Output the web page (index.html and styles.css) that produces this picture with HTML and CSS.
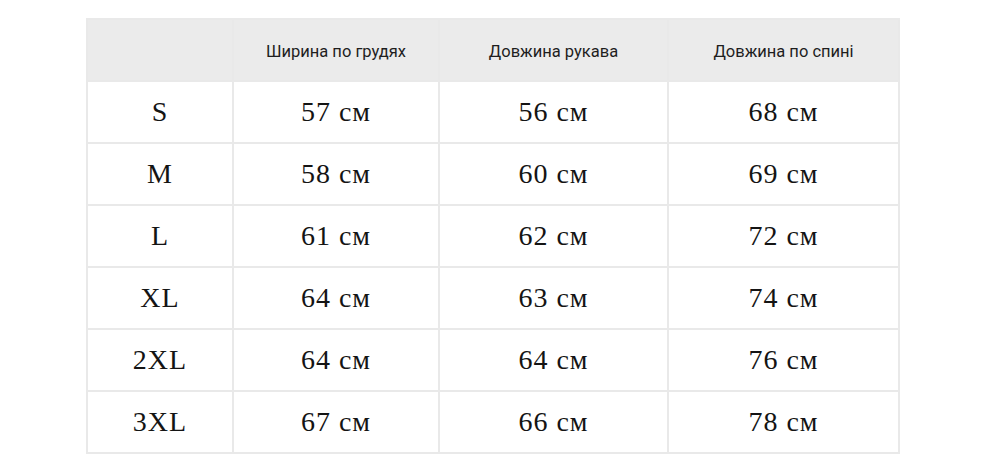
FILE: index.html
```html
<!DOCTYPE html>
<html lang="uk">
<head>
<meta charset="utf-8">
<title>Розмірна сітка</title>
<link rel="stylesheet" href="styles.css">
</head>
<body>
<div class="page">
  <table class="sizes">
    <colgroup>
      <col class="c-size">
      <col class="c-chest">
      <col class="c-sleeve">
      <col class="c-back">
    </colgroup>
    <thead>
      <tr>
        <th></th>
        <th>Ширина по грудях</th>
        <th>Довжина рукава</th>
        <th>Довжина по спині</th>
      </tr>
    </thead>
    <tbody>
      <tr><td>S</td><td>57 см</td><td>56 см</td><td>68 см</td></tr>
      <tr><td>M</td><td>58 см</td><td>60 см</td><td>69 см</td></tr>
      <tr><td>L</td><td>61 см</td><td>62 см</td><td>72 см</td></tr>
      <tr><td>XL</td><td>64 см</td><td>63 см</td><td>74 см</td></tr>
      <tr><td>2XL</td><td>64 см</td><td>64 см</td><td>76 см</td></tr>
      <tr><td>3XL</td><td>67 см</td><td>66 см</td><td>78 см</td></tr>
    </tbody>
  </table>
</div>
</body>
</html>
```

FILE: styles.css
```css
html, body {
  margin: 0;
  padding: 0;
  background: #ffffff;
}

.page {
  padding: 18px 0 0 86px;
}

.sizes {
  border-collapse: collapse;
  table-layout: fixed;
  width: 812px;
  border: 2px solid #e6e6e6;
}

.c-size { width: 146px; }
.c-chest { width: 206px; }
.c-sleeve { width: 229px; }
.c-back { width: 231px; }

.sizes th,
.sizes td {
  border: 2px solid #e9e9e9;
  text-align: center;
  vertical-align: middle;
  padding: 0;
}

.sizes th {
  height: 57px;
  padding-top: 3px;
  background: #ebebeb;
  font-family: Roboto, "Liberation Sans", sans-serif;
  font-size: 16.5px;
  font-weight: 400;
  color: #1e1e1e;
}

.sizes td {
  height: 60px;
  font-family: "Liberation Serif", "Times New Roman", serif;
  font-size: 28px;
  letter-spacing: 1px;
  color: #141414;
}
```
